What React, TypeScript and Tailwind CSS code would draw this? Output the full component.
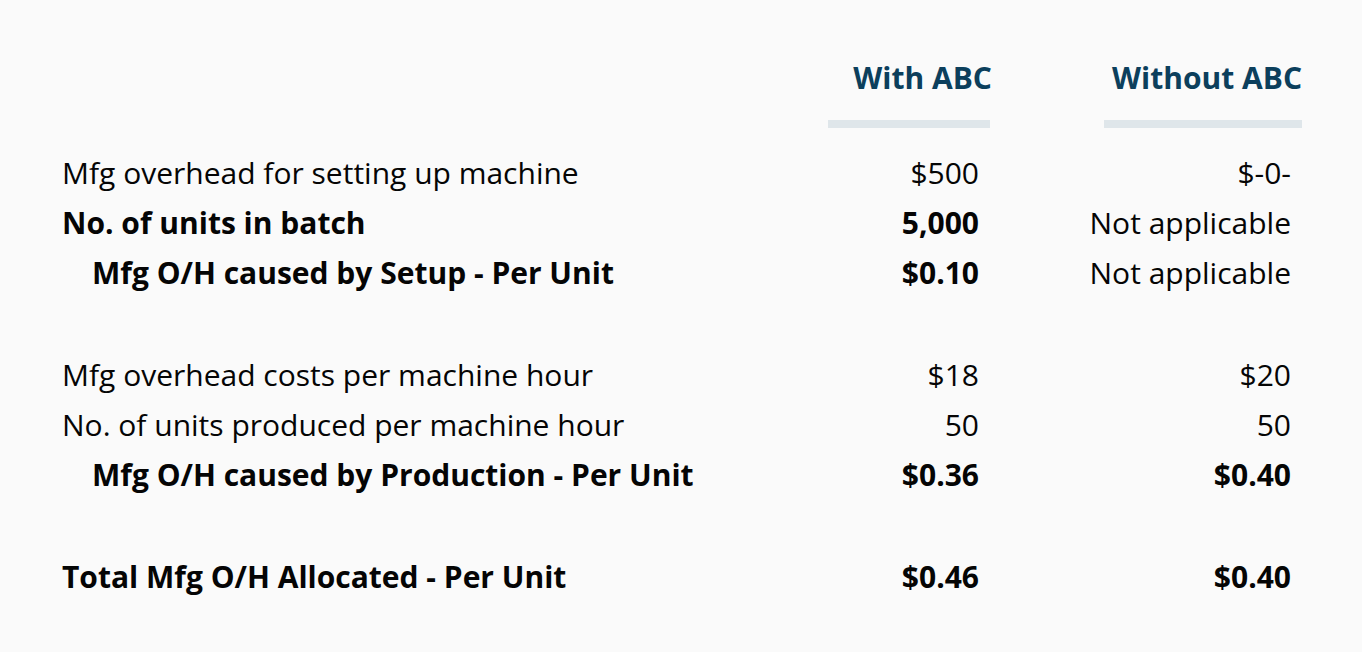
import React from "react";

type Row = {
  label: string;
  a: string;
  b: string;
  bold?: boolean;
  indent?: boolean;
  boldB?: boolean;
};

const groups: Row[][] = [
  [
    { label: "Mfg overhead for setting up machine", a: "$500", b: "$-0-" },
    { label: "No. of units in batch", a: "5,000", b: "Not applicable", bold: true },
    {
      label: "Mfg O/H caused by Setup - Per Unit",
      a: "$0.10",
      b: "Not applicable",
      bold: true,
      indent: true,
    },
  ],
  [
    { label: "Mfg overhead costs per machine hour", a: "$18", b: "$20" },
    { label: "No. of units produced per machine hour", a: "50", b: "50" },
    {
      label: "Mfg O/H caused by Production - Per Unit",
      a: "$0.36",
      b: "$0.40",
      bold: true,
      indent: true,
      boldB: true,
    },
  ],
  [
    {
      label: "Total Mfg O/H Allocated - Per Unit",
      a: "$0.46",
      b: "$0.40",
      bold: true,
      boldB: true,
    },
  ],
];

export default function App() {
  return (
    <div
      className="w-[1362px] h-[652px] bg-[#fafafa] text-[#050505] pl-[62px] pr-[60px] pt-[58px]"
      style={{ fontFamily: '"Open Sans", sans-serif' }}
    >
      <div className="grid grid-cols-[1fr_162px_198px] gap-x-[114px]">
        <div />
        <div className="flex flex-col items-end">
          <div className="text-[30px] leading-[40px] font-bold text-[#0c3f5c] translate-x-[2px]">With ABC</div>
          <div className="w-full h-[8px] bg-[#dfe6ea] mt-[22px]" />
        </div>
        <div className="flex flex-col items-end">
          <div className="text-[30px] leading-[40px] font-bold text-[#0c3f5c]">Without ABC</div>
          <div className="w-full h-[8px] bg-[#dfe6ea] mt-[22px]" />
        </div>
      </div>

      <div className="mt-[20px] flex flex-col gap-[52px]">
        {groups.map((group, gi) => (
          <div key={gi} className="flex flex-col">
            {group.map((row) => (
              <div
                key={row.label}
                className="grid grid-cols-[1fr_162px_198px] gap-x-[114px] text-[30px] leading-[50px] whitespace-nowrap"
              >
                <div className={`${row.bold ? "font-bold" : ""} ${row.indent ? "pl-[30px]" : ""}`}>
                  {row.label}
                </div>
                <div className={`flex justify-end pr-[11px] ${row.bold ? "font-bold" : ""}`}>{row.a}</div>
                <div className={`flex justify-end pr-[11px] ${row.boldB ? "font-bold" : ""}`}>{row.b}</div>
              </div>
            ))}
          </div>
        ))}
      </div>
    </div>
  );
}
